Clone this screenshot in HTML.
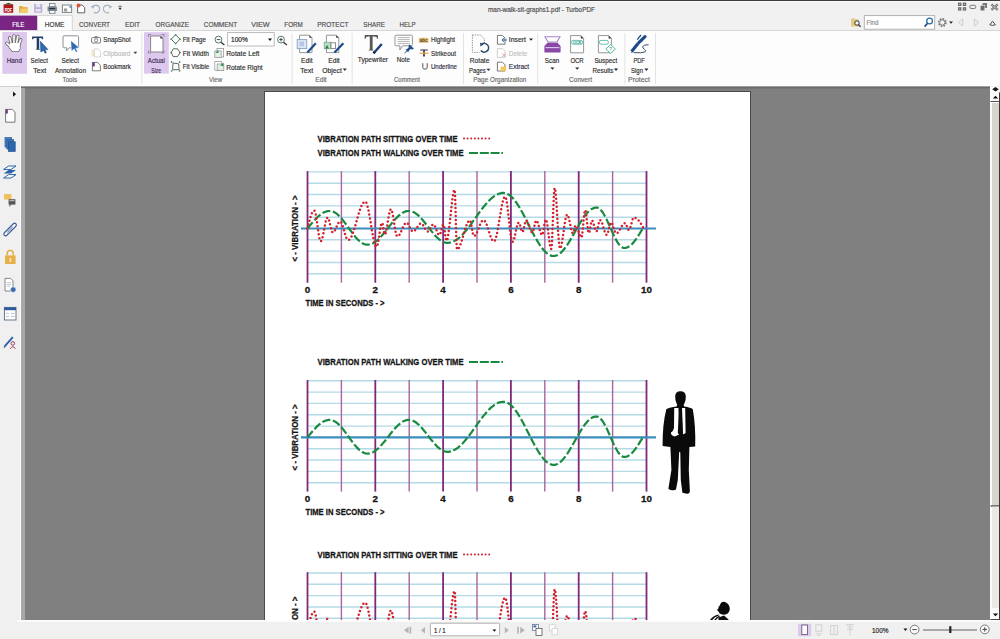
<!DOCTYPE html>
<html><head><meta charset="utf-8">
<style>
*{margin:0;padding:0;box-sizing:border-box}
html,body{width:1000px;height:639px;overflow:hidden;background:#f0f0f0;font-family:"Liberation Sans", sans-serif;}
.abs{position:absolute}
.t{position:absolute;font-size:7px;color:#3a3a3a;white-space:nowrap;line-height:1}
.ct{font-family:"Liberation Sans", sans-serif;font-weight:bold;font-size:9.8px;fill:#151515;stroke:#151515;stroke-width:0.3px}
svg{position:absolute;left:0;top:0;overflow:visible}
</style></head><body>
<div class="abs" style="left:0;top:0;width:1000px;height:1px;background:#3c3c3c"></div>
<div class="abs" style="left:0;top:1px;width:1000px;height:30px;background:#f1f1f1"></div>
<div class="abs" style="left:0;top:30px;width:1000px;height:56px;background:#fdfdfd;border-top:1px solid #d6d6d6"></div>
<svg width='1000' height='639' style='font-family:"Liberation Sans", sans-serif'><rect x="0" y="1" width="1000" height="1" fill="#fbfbfb"/>
<rect x="3.6" y="4.2" width="9.6" height="8.6" fill="#b3141c" rx="0.6"/>
<path d="M4 4.4 L8.5 2.8 L13 4.4 Z" fill="#3a5a2a"/>
<text x="8.4" y="11.6" font-size="6" font-weight="bold" fill="#fff" text-anchor="middle" textLength="7.4" lengthAdjust="spacingAndGlyphs">PDF</text>
<path d="M19 6 L22.5 6 L23.5 7 L27.5 7 L27.5 12.8 L19 12.8 Z" fill="#e2b04c"/>
<path d="M19.5 12.8 L21 8.8 L28.5 8.8 L27.2 12.8 Z" fill="#f0cc6a"/>
<rect x="34.2" y="4" width="8" height="8.8" fill="#b7aed3" rx="0.5"/>
<rect x="36" y="4" width="4.4" height="3.2" fill="#e8e4f3"/>
<rect x="35.6" y="9" width="5.2" height="2.6" fill="#e8e4f3"/>
<rect x="49.5" y="3.6" width="5.5" height="3" fill="#fff" stroke="#76808a" stroke-width="0.9"/>
<rect x="47.5" y="6.4" width="9.5" height="4.8" fill="#7d8a96" rx="1"/>
<rect x="49.2" y="8" width="6" height="1.2" fill="#2a3440"/>
<rect x="49.5" y="10.5" width="5.5" height="2.8" fill="#fff" stroke="#76808a" stroke-width="0.9"/>
<rect x="62.4" y="5" width="9.2" height="7.4" fill="#fff" stroke="#7d8790" stroke-width="1"/>
<rect x="64" y="8.4" width="3.2" height="3.2" fill="#9aa29a"/>
<path d="M68.5 6.2 L71 6.2 L71 8.6 Z" fill="#5d7fb0"/>
<path d="M77.6 5 L82.2 5 L84.7 7.6 L84.7 12.8 L77.6 12.8 Z" fill="#fff" stroke="#555" stroke-width="0.9"/>
<circle cx="78.5" cy="5.4" r="2" fill="#d8563a"/>
<path d="M92.5 7 A3.8 3.8 0 1 1 94 12.3" fill="none" stroke="#9eb0c4" stroke-width="1.3"/>
<path d="M90.6 6.8 L93.8 5.2 L93.6 8.8 Z" fill="#9eb0c4"/>
<path d="M110.5 7 A3.8 3.8 0 1 0 109 12.3" fill="none" stroke="#a8b6c6" stroke-width="1.3"/>
<path d="M112.4 6.8 L109.2 5.2 L109.4 8.8 Z" fill="#a8b6c6"/>
<rect x="118.6" y="5.8" width="3" height="0.8" fill="#333"/>
<path d="M118.4 7.8 L121.8 7.8 L120.1 10 Z" fill="#333"/>
<text x="488" y="12" font-size="7.8" fill="#4a4a4a" stroke="#4a4a4a" stroke-width="0.18" font-weight="normal" text-anchor="start" textLength="107" lengthAdjust="spacingAndGlyphs" >man-walk-sit-graphs1.pdf - TurboPDF</text>
<g fill="#6e6e6e"><rect x="958" y="2.6" width="3.4" height="3.4"/><rect x="962.8" y="2.6" width="3.4" height="3.4"/><rect x="958" y="7.2" width="3.4" height="3.4"/><rect x="962.8" y="7.2" width="3.4" height="3.4"/></g>
<g fill="#c8c8c8"><rect x="959.2" y="3.8" width="1" height="1"/><rect x="964" y="3.8" width="1" height="1"/><rect x="959.2" y="8.4" width="1" height="1"/><rect x="964" y="8.4" width="1" height="1"/></g>
<rect x="969.8" y="5.3" width="6" height="3.2" fill="none" stroke="#777" stroke-width="1" rx="1.4"/>
<rect x="982.6" y="3" width="4.4" height="5" fill="#7a7a7a"/><rect x="980.2" y="5.4" width="4.6" height="5.4" fill="#6e6e6e" stroke="#f0f0f0" stroke-width="0.5"/>
<path d="M991.4 4.4 L997.8 9.8 M997.8 4.4 L991.4 9.8" stroke="#6a6a6a" stroke-width="2.2"/>
<path d="M991.4 4.4 L997.8 9.8 M997.8 4.4 L991.4 9.8" stroke="#e8e8e8" stroke-width="0.6"/>
<path d="M851.2 18.5 L854.5 18.5 L855.5 19.5 L859 19.5 L859 26.5 L851.2 26.5 Z" fill="#e4c77c"/>
<circle cx="857" cy="23" r="2.2" fill="#fff" stroke="#333" stroke-width="1"/><path d="M858.6 24.6 L860.6 26.8" stroke="#333" stroke-width="1.3"/>
<rect x="864.3" y="15.6" width="70.4" height="13.6" fill="#fff" stroke="#acacac" stroke-width="0.9"/>
<text x="866.4" y="25.4" font-size="7" fill="#8c8c8c" stroke="#8c8c8c" stroke-width="0.18" font-weight="normal" text-anchor="start" textLength="12" lengthAdjust="spacingAndGlyphs" >Find</text>
<circle cx="929.6" cy="21" r="2.9" fill="none" stroke="#2d6ca8" stroke-width="1.3"/><path d="M927.6 23.2 L924.6 26.6" stroke="#1f4f85" stroke-width="1.7"/>
<circle cx="942.3" cy="22.5" r="3.6" fill="none" stroke="#707070" stroke-width="1.6" stroke-dasharray="1.6 1.2"/>
<circle cx="942.3" cy="22.5" r="2.6" fill="none" stroke="#707070" stroke-width="0.8"/>
<path d="M949 21.5 L953 21.5 L951 23.8 Z" fill="#222"/>
<path d="M962.8 19 L958.6 22.5 L962.8 26 Z" fill="none" stroke="#c8c8c8" stroke-width="0.9"/>
<path d="M974.4 19 L978.6 22.5 L974.4 26 Z" fill="none" stroke="#c8c8c8" stroke-width="0.9"/>
<path d="M989.8 24.8 L992.6 21.2 L995.4 24.8 Q992.6 26 989.8 24.8 Z" fill="none" stroke="#3a3a3a" stroke-width="0.9"/>
<rect x="0" y="15.6" width="37.4" height="14.4" fill="#7a2583"/>
<text x="12.3" y="26.6" font-size="7.4" fill="#ffffff" stroke="#ffffff" stroke-width="0.18" font-weight="normal" text-anchor="start" textLength="12" lengthAdjust="spacingAndGlyphs" >FILE</text>
<path d="M37.5 30.5 L37.5 15.5 L72.3 15.5 L72.3 30.5" fill="#fdfdfd" stroke="#d2d2d2" stroke-width="0.9"/>
<text x="44.8" y="26.8" font-size="7.6" fill="#3c3c3c" stroke="#3c3c3c" stroke-width="0.18" font-weight="normal" text-anchor="start" textLength="19.7" lengthAdjust="spacingAndGlyphs" >HOME</text>
<text x="79" y="26.8" font-size="7.6" fill="#505050" stroke="#505050" stroke-width="0.18" font-weight="normal" text-anchor="start" textLength="31" lengthAdjust="spacingAndGlyphs" >CONVERT</text>
<text x="125" y="26.8" font-size="7.6" fill="#505050" stroke="#505050" stroke-width="0.18" font-weight="normal" text-anchor="start" textLength="15" lengthAdjust="spacingAndGlyphs" >EDIT</text>
<text x="155.6" y="26.8" font-size="7.6" fill="#505050" stroke="#505050" stroke-width="0.18" font-weight="normal" text-anchor="start" textLength="33.4" lengthAdjust="spacingAndGlyphs" >ORGANIZE</text>
<text x="203.7" y="26.8" font-size="7.6" fill="#505050" stroke="#505050" stroke-width="0.18" font-weight="normal" text-anchor="start" textLength="33.6" lengthAdjust="spacingAndGlyphs" >COMMENT</text>
<text x="251.2" y="26.8" font-size="7.6" fill="#505050" stroke="#505050" stroke-width="0.18" font-weight="normal" text-anchor="start" textLength="18.5" lengthAdjust="spacingAndGlyphs" >VIEW</text>
<text x="284.3" y="26.8" font-size="7.6" fill="#505050" stroke="#505050" stroke-width="0.18" font-weight="normal" text-anchor="start" textLength="18.5" lengthAdjust="spacingAndGlyphs" >FORM</text>
<text x="317.2" y="26.8" font-size="7.6" fill="#505050" stroke="#505050" stroke-width="0.18" font-weight="normal" text-anchor="start" textLength="31.2" lengthAdjust="spacingAndGlyphs" >PROTECT</text>
<text x="363.3" y="26.8" font-size="7.6" fill="#505050" stroke="#505050" stroke-width="0.18" font-weight="normal" text-anchor="start" textLength="21.6" lengthAdjust="spacingAndGlyphs" >SHARE</text>
<text x="399.5" y="26.8" font-size="7.6" fill="#505050" stroke="#505050" stroke-width="0.18" font-weight="normal" text-anchor="start" textLength="16.1" lengthAdjust="spacingAndGlyphs" >HELP</text><rect x="141.3" y="33" width="1" height="51" fill="#e3e3e3"/>
<rect x="291.6" y="33" width="1" height="51" fill="#e3e3e3"/>
<rect x="351.6" y="33" width="1" height="51" fill="#e3e3e3"/>
<rect x="463" y="33" width="1" height="51" fill="#e3e3e3"/>
<rect x="537.2" y="33" width="1" height="51" fill="#e3e3e3"/>
<rect x="624.4" y="33" width="1" height="51" fill="#e3e3e3"/>
<rect x="655" y="33" width="1" height="51" fill="#e3e3e3"/>
<rect x="2.4" y="32" width="24.6" height="41.8" fill="#ddc8ee"/>
<rect x="144" y="32.2" width="24.8" height="41.4" fill="#ddc8ee"/>
<path d="M11 47 L6.8 43.2 M11.6 44 L9.6 37.8 M14 43.6 L14 35.8 M16.6 43.6 L17.8 36.4 M18.6 45 L20.8 39.8" stroke="#6a6a6a" stroke-width="3.3" stroke-linecap="round"/>
<path d="M10.2 43 L19.8 43 L19.8 48.6 L18.4 51.2 L12.4 51.2 L9.4 47.6 Z" fill="#6a6a6a" stroke="#6a6a6a" stroke-width="1.4" stroke-linejoin="round"/>
<path d="M11 47 L6.8 43.2 M11.6 44 L9.6 37.8 M14 43.6 L14 35.8 M16.6 43.6 L17.8 36.4 M18.6 45 L20.8 39.8" stroke="#ffffff" stroke-width="1.7" stroke-linecap="round"/>
<path d="M10.2 43 L19.8 43 L19.8 48.6 L18.4 51.2 L12.4 51.2 L9.4 47.6 Z" fill="#ffffff"/>
<path d="M11.4 43.2 L11.2 40.6 M15.2 42.8 L15.4 38.6 M17.6 43.2 L18.6 40" stroke="#8a8a8a" stroke-width="0.6"/>
<text x="6.65" y="63" font-size="7.8" fill="#3c2e4e" stroke="#3c2e4e" stroke-width="0.18" font-weight="normal" text-anchor="start" textLength="15.3" lengthAdjust="spacingAndGlyphs" >Hand</text>
<path d="M32.2 36.4 L43 36.4 L43.2 39.2 L42.2 39.2 Q41.8 38 40.4 38 L39.2 38 L39.2 49 L40.4 49.7 L35.4 49.7 L36.7 49 L36.7 38 L34.8 38 Q33.4 38 33 39.2 L32 39.2 Z" fill="#1f3d68"/>
<path d="M40.4 41.2 L48 49.6 L45 49.8 L46.4 52.6 L45 53.2 L43.6 50.4 L40.8 52 Z" fill="#2c6bb2" stroke="#1a3f70" stroke-width="0.5"/>
<text x="30.6" y="63" font-size="7.8" fill="#2e2e2e" stroke="#2e2e2e" stroke-width="0.18" font-weight="normal" text-anchor="start" textLength="17.4" lengthAdjust="spacingAndGlyphs" >Select</text>
<text x="33.35" y="72.5" font-size="7.8" fill="#2e2e2e" stroke="#2e2e2e" stroke-width="0.18" font-weight="normal" text-anchor="start" textLength="12.9" lengthAdjust="spacingAndGlyphs" >Text</text>
<path d="M64 35.8 L77.6 35.8 Q78.6 35.8 78.6 36.8 L78.6 47 Q78.6 47.8 77.6 47.8 L69 47.8 L66.4 51 L66.8 47.8 L64 47.8 Q63 47.8 63 46.8 L63 36.8 Q63 35.8 64 35.8 Z" fill="#ffffff" stroke="#8a929c" stroke-width="1"/>
<path d="M70.8 40.4 L79.2 47.8 L75.8 48.2 L77.6 51.6 L75.9 52.3 L74.2 48.9 L71.4 51.2 Z" fill="#2c6bb2" stroke="#fff" stroke-width="0.5"/>
<text x="61.5" y="63" font-size="7.8" fill="#2e2e2e" stroke="#2e2e2e" stroke-width="0.18" font-weight="normal" text-anchor="start" textLength="17.4" lengthAdjust="spacingAndGlyphs" >Select</text>
<text x="55.0" y="72.5" font-size="7.8" fill="#2e2e2e" stroke="#2e2e2e" stroke-width="0.18" font-weight="normal" text-anchor="start" textLength="31" lengthAdjust="spacingAndGlyphs" >Annotation</text>
<rect x="91.6" y="37.6" width="9" height="5.4" fill="none" stroke="#7c7c7c" stroke-width="1" rx="1"/>
<rect x="94.6" y="36.2" width="3" height="1.6" fill="#7c7c7c"/>
<circle cx="96.1" cy="40.3" r="1.6" fill="none" stroke="#7c7c7c" stroke-width="0.9"/>
<text x="103.3" y="42.3" font-size="7.8" fill="#2e2e2e" stroke="#2e2e2e" stroke-width="0.18" font-weight="normal" text-anchor="start" textLength="27.4" lengthAdjust="spacingAndGlyphs" >SnapShot</text>
<rect x="91.5" y="49.5" width="5" height="7" fill="#f2e6c4"/>
<path d="M94.5 49 L98 49 L100.6 52 L100.6 57 L94.5 57 Z" fill="#fff" stroke="#d4d4d4" stroke-width="0.9"/>
<text x="103.3" y="55.5" font-size="7.8" fill="#bdbdbd" stroke="#bdbdbd" stroke-width="0.18" font-weight="normal" text-anchor="start" textLength="27" lengthAdjust="spacingAndGlyphs" >Clipboard</text>
<path d="M133.3 51.8 L137.3 51.8 L135.3 54.099999999999994 Z" fill="#444"/>
<path d="M92.4 62.4 L97.6 62.4 L100.4 65.4 L100.4 70.8 L92.4 70.8 Z" fill="#fff" stroke="#6c6c6c" stroke-width="0.9"/>
<rect x="92.4" y="62.4" width="2.4" height="4" fill="#6a3a8a"/>
<text x="103.3" y="69" font-size="7.8" fill="#2e2e2e" stroke="#2e2e2e" stroke-width="0.18" font-weight="normal" text-anchor="start" textLength="27.6" lengthAdjust="spacingAndGlyphs" >Bookmark</text>
<text x="62.6" y="82.3" font-size="7.8" fill="#6a6a6a" stroke="#6a6a6a" stroke-width="0.18" font-weight="normal" text-anchor="start" textLength="14.4" lengthAdjust="spacingAndGlyphs" >Tools</text>
<path d="M148.5 37 L148.5 34.5 L151 34.5 M161.5 34.5 L164 34.5 L164 37 M164 50.5 L164 53 L161.5 53 M151 53 L148.5 53 L148.5 50.5" fill="none" stroke="#8c7aa6" stroke-width="0.9"/>
<path d="M150.6 36 L160.4 36 L163 38.6 L163 52 L150.6 52 Z" fill="#fff" stroke="#7a7a7a" stroke-width="0.9"/>
<path d="M160.4 36 L163 38.6 L160.4 38.6 Z" fill="#333"/>
<text x="147.85" y="63" font-size="7.8" fill="#3c2e4e" stroke="#3c2e4e" stroke-width="0.18" font-weight="normal" text-anchor="start" textLength="16.9" lengthAdjust="spacingAndGlyphs" >Actual</text>
<text x="151.35" y="72.8" font-size="7.8" fill="#3c2e4e" stroke="#3c2e4e" stroke-width="0.18" font-weight="normal" text-anchor="start" textLength="9.7" lengthAdjust="spacingAndGlyphs" >Size</text>
<path d="M175.6 34.8 L180 39.2 L175.6 43.6 L171.2 39.2 Z" fill="none" stroke="#3e5c4e" stroke-width="0.9"/>
<g fill="#4a8a6a"><circle cx="175.6" cy="34.8" r="0.9"/><circle cx="180" cy="39.2" r="0.9"/><circle cx="175.6" cy="43.6" r="0.9"/><circle cx="171.2" cy="39.2" r="0.9"/></g>
<text x="182.8" y="42.2" font-size="7.8" fill="#2e2e2e" stroke="#2e2e2e" stroke-width="0.18" font-weight="normal" text-anchor="start" textLength="23.2" lengthAdjust="spacingAndGlyphs" >Fit Page</text>
<path d="M173.2 48.8 L177.6 48.8 L180 52.6 L177.6 56.6 L173.2 56.6 L171.2 52.6 Z" fill="none" stroke="#4a5a54" stroke-width="0.9"/>
<g fill="#4a8a6a"><circle cx="171.2" cy="52.6" r="0.9"/><circle cx="180" cy="52.6" r="0.9"/></g>
<text x="182.8" y="55.5" font-size="7.8" fill="#2e2e2e" stroke="#2e2e2e" stroke-width="0.18" font-weight="normal" text-anchor="start" textLength="26.2" lengthAdjust="spacingAndGlyphs" >Fit Width</text>
<path d="M173 63 L178.6 63.8 L179.2 69.6 L172.6 69.8 Z" fill="none" stroke="#4a5a54" stroke-width="0.9"/>
<g fill="#4a8a6a"><circle cx="171.6" cy="62" r="0.9"/><circle cx="179.6" cy="62" r="0.9"/><circle cx="171.6" cy="70.8" r="0.9"/><circle cx="179.6" cy="70.8" r="0.9"/></g>
<text x="182.8" y="69.2" font-size="7.8" fill="#2e2e2e" stroke="#2e2e2e" stroke-width="0.18" font-weight="normal" text-anchor="start" textLength="26.4" lengthAdjust="spacingAndGlyphs" >Fit Visible</text>
<text x="209.0" y="82.3" font-size="7.8" fill="#6a6a6a" stroke="#6a6a6a" stroke-width="0.18" font-weight="normal" text-anchor="start" textLength="13" lengthAdjust="spacingAndGlyphs" >View</text>
<circle cx="218.5" cy="39.6" r="3.4" fill="#fff" stroke="#557a6e" stroke-width="1"/><path d="M216.8 39.6 L220.2 39.6" stroke="#333" stroke-width="0.9"/><path d="M221 42.2 L224.4 45" stroke="#333" stroke-width="1.3"/>
<rect x="227.6" y="32.6" width="46.6" height="13.4" fill="#fff" stroke="#b4b4b4" stroke-width="0.9"/>
<text x="231" y="42.4" font-size="7.4" fill="#222" stroke="#222" stroke-width="0.18" font-weight="normal" text-anchor="start" textLength="16.8" lengthAdjust="spacingAndGlyphs" >100%</text>
<path d="M268 38.6 L272 38.6 L270 40.9 Z" fill="#111"/>
<circle cx="281" cy="39.6" r="3.4" fill="#fff" stroke="#557a6e" stroke-width="1"/><path d="M279.3 39.6 L282.7 39.6 M281 37.9 L281 41.3" stroke="#333" stroke-width="0.9"/><path d="M283.5 42.2 L286.9 45" stroke="#333" stroke-width="1.3"/>
<rect x="217" y="48.4" width="6.6" height="8.6" fill="#fff" stroke="#9a9a9a" stroke-width="0.8"/><rect x="214.8" y="51" width="6.4" height="6.4" fill="#e4efe8" stroke="#9a9a9a" stroke-width="0.8"/><path d="M215.6 53 L218.2 50 L218.6 52.8 Z" fill="#2e8a5a"/>
<text x="226.2" y="56.2" font-size="7.8" fill="#2e2e2e" stroke="#2e2e2e" stroke-width="0.18" font-weight="normal" text-anchor="start" textLength="33.3" lengthAdjust="spacingAndGlyphs" >Rotate Left</text>
<rect x="214.8" y="61.6" width="6.6" height="8.6" fill="#fff" stroke="#9a9a9a" stroke-width="0.8"/><rect x="217.2" y="64" width="6.6" height="6.6" fill="#dff0e4" stroke="#9a9a9a" stroke-width="0.8"/><path d="M223.4 62.6 L220.4 65.6 L223.4 66.2 Z" fill="#2e8a5a"/>
<text x="226.2" y="69.6" font-size="7.8" fill="#2e2e2e" stroke="#2e2e2e" stroke-width="0.18" font-weight="normal" text-anchor="start" textLength="36.5" lengthAdjust="spacingAndGlyphs" >Rotate Right</text>
<path d="M299.6 35.2 L309.4 35.2 L312 37.8 L312 52.6 L299.6 52.6 Z" fill="#fff" stroke="#8a8a8a" stroke-width="0.9"/>
<path d="M309.4 35.2 L312 37.8 L309.4 37.8 Z" fill="#333"/>
<rect x="297.2" y="39.6" width="9.6" height="9" fill="#dbe6f4" stroke="#8aa0c0" stroke-width="0.9"/>
<rect x="299.4" y="41.6" width="4.6" height="4.6" fill="#b4c8e4"/>
<path d="M307.4 52.6 L315.8 43.2" stroke="#1d4a8e" stroke-width="2.2"/>
<text x="301.1" y="63" font-size="7.8" fill="#2e2e2e" stroke="#2e2e2e" stroke-width="0.18" font-weight="normal" text-anchor="start" textLength="11.4" lengthAdjust="spacingAndGlyphs" >Edit</text>
<text x="300.35" y="72.5" font-size="7.8" fill="#2e2e2e" stroke="#2e2e2e" stroke-width="0.18" font-weight="normal" text-anchor="start" textLength="12.9" lengthAdjust="spacingAndGlyphs" >Text</text>
<path d="M326.4 35.2 L336.2 35.2 L338.8 37.8 L338.8 52.6 L326.4 52.6 Z" fill="#fff" stroke="#8a8a8a" stroke-width="0.9"/>
<path d="M336.2 35.2 L338.8 37.8 L336.2 37.8 Z" fill="#333"/>
<rect x="324.2" y="42.2" width="6.8" height="6.6" fill="#b8dcc4" stroke="#7aa88a" stroke-width="0.8"/>
<rect x="331" y="42.8" width="4.6" height="5.6" fill="#fff" stroke="#777" stroke-width="0.8"/>
<path d="M325 48.6 L327 45 L329 48.6 Z" fill="#2c7a4a"/>
<path d="M334.4 52.6 L343.4 43.2" stroke="#1d4a8e" stroke-width="2.2"/>
<text x="328.3" y="63" font-size="7.8" fill="#2e2e2e" stroke="#2e2e2e" stroke-width="0.18" font-weight="normal" text-anchor="start" textLength="11.4" lengthAdjust="spacingAndGlyphs" >Edit</text>
<text x="322.2" y="72.5" font-size="7.8" fill="#2e2e2e" stroke="#2e2e2e" stroke-width="0.18" font-weight="normal" text-anchor="start" textLength="19.6" lengthAdjust="spacingAndGlyphs" >Object</text>
<path d="M342.8 68.6 L346.8 68.6 L344.8 70.89999999999999 Z" fill="#333"/>
<text x="315.3" y="82.3" font-size="7.8" fill="#6a6a6a" stroke="#6a6a6a" stroke-width="0.18" font-weight="normal" text-anchor="start" textLength="11.4" lengthAdjust="spacingAndGlyphs" >Edit</text>
<path d="M364.8 35 L377.8 35 L378 38.8 L377.2 38.8 Q376.8 36.6 374.6 36.6 L372.6 36.6 L372.6 49.2 L373.8 50.4 L368.4 50.4 L369.8 49.2 L369.8 36.6 L368 36.6 Q365.8 36.6 365.6 38.8 L364.6 38.8 Z" fill="#585858"/>
<path d="M373.6 53.2 L381.8 44" stroke="#1d4078" stroke-width="2.4"/>
<path d="M373.6 53.2 L374.8 51.8" stroke="#0d2040" stroke-width="2.4"/>
<text x="357.8" y="62.4" font-size="7.8" fill="#2e2e2e" stroke="#2e2e2e" stroke-width="0.18" font-weight="normal" text-anchor="start" textLength="30.2" lengthAdjust="spacingAndGlyphs" >Typewriter</text>
<path d="M396 35.2 L411.4 35.2 Q412.4 35.2 412.4 36.2 L412.4 44.8 Q412.4 45.8 411.4 45.8 L402.6 45.8 L399.8 50 L400 45.8 L396 45.8 Q395 45.8 395 44.8 L395 36.2 Q395 35.2 396 35.2 Z" fill="#fff" stroke="#8a8a8a" stroke-width="0.9"/>
<g stroke="#9a9a9a" stroke-width="0.7"><path d="M397.6 37.6 L409.8 37.6 M397.6 39.6 L409.8 39.6 M397.6 41.6 L409.8 41.6 M397.6 43.6 L409.8 43.6"/></g>
<path d="M409.6 44.4 L413.8 48.6 L412.6 49.4 L410.6 49 L408.6 51 L408.4 52.4 L407.2 51.2 L404.6 53.6 L404.2 53.2 L406.6 50.6 L405.4 49.4 L406.8 49.2 L408.8 47.2 L408.6 45.4 Z" fill="#244c8c"/>
<text x="396.8" y="62.4" font-size="7.8" fill="#2e2e2e" stroke="#2e2e2e" stroke-width="0.18" font-weight="normal" text-anchor="start" textLength="13.2" lengthAdjust="spacingAndGlyphs" >Note</text>
<rect x="418.8" y="37.8" width="9.6" height="5" fill="#e2c27a"/>
<text x="423.6" y="42" font-size="4.6" fill="#5a4a2a" text-anchor="middle" font-weight="bold">abc</text>
<text x="430.9" y="42.2" font-size="7.8" fill="#333" stroke="#333" stroke-width="0.18" font-weight="normal" text-anchor="start" textLength="24.2" lengthAdjust="spacingAndGlyphs" >Highlight</text>
<path d="M420.2 49.4 L427.8 49.4 L427.8 50.6 L424.8 50.6 L424.8 56.6 L423.2 56.6 L423.2 50.6 L420.2 50.6 Z" fill="#333"/>
<rect x="419.6" y="52.6" width="8.8" height="1.2" fill="#e8a050"/>
<text x="430.9" y="55.5" font-size="7.8" fill="#333" stroke="#333" stroke-width="0.18" font-weight="normal" text-anchor="start" textLength="25.1" lengthAdjust="spacingAndGlyphs" >Strikeout</text>
<path d="M422.8 63.2 L422.8 67.4 Q422.8 69.2 425 69.2 Q427.2 69.2 427.2 67.4 L427.2 63.2" fill="none" stroke="#555" stroke-width="1"/>
<text x="430.9" y="69.2" font-size="7.8" fill="#2e2e48" stroke="#2e2e48" stroke-width="0.18" font-weight="normal" text-anchor="start" textLength="26.1" lengthAdjust="spacingAndGlyphs" >Underline</text>
<text x="394.0" y="82.3" font-size="7.8" fill="#6a6a6a" stroke="#6a6a6a" stroke-width="0.18" font-weight="normal" text-anchor="start" textLength="26" lengthAdjust="spacingAndGlyphs" >Comment</text>
<path d="M472.4 35 L480.6 35 L484.4 38.8 L484.4 43 M472.4 35 L472.4 52.4 L479.6 52.4" fill="none" stroke="#8a8a8a" stroke-width="0.9" stroke-dasharray="1.4 1"/>
<path d="M481.6 44.2 A4.4 4.4 0 1 1 480.8 50.6" fill="none" stroke="#2f4e6e" stroke-width="1.6"/>
<path d="M480 42.4 L483.6 44.4 L480.4 46.6 Z" fill="#2f4e6e"/>
<text x="469.85" y="63.4" font-size="7.8" fill="#2e2e2e" stroke="#2e2e2e" stroke-width="0.18" font-weight="normal" text-anchor="start" textLength="19.5" lengthAdjust="spacingAndGlyphs" >Rotate</text>
<text x="469" y="72.8" font-size="7.8" fill="#2e2e2e" stroke="#2e2e2e" stroke-width="0.18" font-weight="normal" text-anchor="start" textLength="16.8" lengthAdjust="spacingAndGlyphs" >Pages</text>
<path d="M486.4 68.8 L490.4 68.8 L488.4 71.1 Z" fill="#333"/>
<path d="M497.4 35.4 L502.4 35.4 L505 38 L505 44.2 L497.4 44.2 Z" fill="#fff" stroke="#6a6a6a" stroke-width="0.9"/>
<path d="M502 40 L507 40 M503.8 38.2 L502 40 L503.8 41.8" fill="none" stroke="#2a62a8" stroke-width="1"/>
<text x="508.8" y="42.2" font-size="7.8" fill="#2f2f2f" stroke="#2f2f2f" stroke-width="0.18" font-weight="normal" text-anchor="start" textLength="17.2" lengthAdjust="spacingAndGlyphs" >Insert</text>
<path d="M529 38.4 L533 38.4 L531 40.699999999999996 Z" fill="#222"/>
<path d="M497.4 48.6 L502.4 48.6 L505 51.2 L505 57.4 L497.4 57.4 Z" fill="#fff" stroke="#c8c8c8" stroke-width="0.9"/>
<path d="M502.2 53.4 L505.8 57 M505.8 53.4 L502.2 57" stroke="#e0a0a0" stroke-width="0.9"/>
<text x="508.8" y="55.5" font-size="7.8" fill="#c0c0c0" stroke="#c0c0c0" stroke-width="0.18" font-weight="normal" text-anchor="start" textLength="18.4" lengthAdjust="spacingAndGlyphs" >Delete</text>
<path d="M497.4 62.2 L502.4 62.2 L505 64.8 L505 71 L497.4 71 Z" fill="#fff" stroke="#6a6a6a" stroke-width="0.9"/>
<rect x="500.6" y="66.6" width="5.4" height="4.6" fill="#f0c860"/>
<text x="508.8" y="69.2" font-size="7.8" fill="#2e2e48" stroke="#2e2e48" stroke-width="0.18" font-weight="normal" text-anchor="start" textLength="20.4" lengthAdjust="spacingAndGlyphs" >Extract</text>
<text x="473.3" y="82.3" font-size="7.8" fill="#6a6a6a" stroke="#6a6a6a" stroke-width="0.18" font-weight="normal" text-anchor="start" textLength="53" lengthAdjust="spacingAndGlyphs" >Page Organization</text>
<path d="M545 36.8 L560 36.8 L557 42 L548 42 Z" fill="none" stroke="#a884c4" stroke-width="1.1"/>
<path d="M547.5 42.8 L557.5 42.8 L560.6 46 L560.6 51.8 Q560.6 52.4 560 52.4 L545 52.4 Q544.4 52.4 544.4 51.8 L544.4 46 Z" fill="#8a48a6"/>
<rect x="545.6" y="47" width="13.8" height="1.2" fill="#d8c0e8"/>
<text x="544.8" y="63" font-size="7.8" fill="#2e2e2e" stroke="#2e2e2e" stroke-width="0.18" font-weight="normal" text-anchor="start" textLength="14.4" lengthAdjust="spacingAndGlyphs" >Scan</text>
<path d="M550.4 67.4 L554.4 67.4 L552.4 69.7 Z" fill="#222"/>
<path d="M570.6 35.6 L580.8 35.6 L583.6 38.4 L583.6 52.8 L570.6 52.8 Z" fill="#fff" stroke="#8a8a8a" stroke-width="0.9"/>
<path d="M580.8 35.6 L583.6 38.4 L580.8 38.4 Z" fill="#333"/>
<rect x="571.6" y="40.4" width="11" height="3.8" fill="none" stroke="#3fb49a" stroke-width="0.8" rx="1.6"/>
<text x="577.1" y="43.6" font-size="3.6" fill="#2a9a80" text-anchor="middle" font-weight="bold">OCR</text>
<text x="570.4" y="63" font-size="7.8" fill="#2e2e2e" stroke="#2e2e2e" stroke-width="0.18" font-weight="normal" text-anchor="start" textLength="13.2" lengthAdjust="spacingAndGlyphs" >OCR</text>
<path d="M575.2 67.4 L579.2 67.4 L577.2 69.7 Z" fill="#222"/>
<path d="M598.4 35.6 L608.6 35.6 L611.4 38.4 L611.4 52.8 L598.4 52.8 Z" fill="#fff" stroke="#8a8a8a" stroke-width="0.9"/>
<path d="M608.6 35.6 L611.4 38.4 L608.6 38.4 Z" fill="#333"/>
<rect x="599.4" y="40.4" width="9" height="3.8" fill="none" stroke="#3fb49a" stroke-width="0.8" rx="1.6"/>
<path d="M610.6 44.6 L615.4 49 L610.6 53.4 L605.8 49 Z" fill="#fff" stroke="#3fb49a" stroke-width="0.9"/>
<text x="610.6" y="51" font-size="5" fill="#2a9a80" text-anchor="middle">?</text>
<text x="594.4" y="63" font-size="7.8" fill="#2e2e2e" stroke="#2e2e2e" stroke-width="0.18" font-weight="normal" text-anchor="start" textLength="22.8" lengthAdjust="spacingAndGlyphs" >Suspect</text>
<text x="592.6" y="72.6" font-size="7.8" fill="#2e2e2e" stroke="#2e2e2e" stroke-width="0.18" font-weight="normal" text-anchor="start" textLength="20.8" lengthAdjust="spacingAndGlyphs" >Results</text>
<path d="M614 68.6 L618 68.6 L616 70.89999999999999 Z" fill="#222"/>
<text x="569.0" y="82.3" font-size="7.8" fill="#6a6a6a" stroke="#6a6a6a" stroke-width="0.18" font-weight="normal" text-anchor="start" textLength="23" lengthAdjust="spacingAndGlyphs" >Convert</text>
<path d="M631.6 51.4 L638 43.6" stroke="#1f4a8a" stroke-width="3.2"/>
<path d="M638.8 42.6 L645 36.6" stroke="#1f4a8a" stroke-width="3.2" stroke-linecap="round"/>
<path d="M631.6 51.4 L630.8 52.8 L632.6 52.2 Z" fill="#1a3060"/>
<path d="M637.2 39.6 L641 35" stroke="#1f4a8a" stroke-width="1.2"/>
<path d="M648.6 44.8 Q643.6 44.6 642.8 46.4 Q642.2 48 644.6 49.4 Q646.4 50.8 644.8 52 Q642 53.2 633.6 52.6" fill="none" stroke="#3c4c6c" stroke-width="1"/>
<text x="633.4" y="63" font-size="7.8" fill="#2e2e2e" stroke="#2e2e2e" stroke-width="0.18" font-weight="normal" text-anchor="start" textLength="11.4" lengthAdjust="spacingAndGlyphs" >PDF</text>
<text x="631" y="72.6" font-size="7.8" fill="#2e2e2e" stroke="#2e2e2e" stroke-width="0.18" font-weight="normal" text-anchor="start" textLength="12" lengthAdjust="spacingAndGlyphs" >Sign</text>
<path d="M644.4 68.6 L648.4 68.6 L646.4 70.89999999999999 Z" fill="#222"/>
<text x="628.0" y="82.3" font-size="7.8" fill="#6a6a6a" stroke="#6a6a6a" stroke-width="0.18" font-weight="normal" text-anchor="start" textLength="22" lengthAdjust="spacingAndGlyphs" >Protect</text></svg>
<div class="abs" style="left:0;top:86px;width:21px;height:534px;background:#f0f0f0;border-top:1px solid #d0d0d0"></div>
<div class="abs" style="left:20px;top:86px;width:1px;height:534px;background:#fafafa"></div>
<div class="abs" style="left:21px;top:86px;width:969px;height:534px;background:#808080"></div>
<div class="abs" style="left:21px;top:86px;width:969px;height:1px;background:#a0a0a0"></div><div class="abs" style="left:21px;top:87px;width:969px;height:1px;background:#6a6a6a"></div><div class="abs" style="left:21px;top:88px;width:969px;height:1px;background:#767676"></div>
<div class="abs" style="left:21px;top:88px;width:4px;height:532px;background:#a8a8a8"></div>
<div class="abs" style="left:264px;top:90.5px;width:487px;height:529.5px;background:#ffffff;border:1px solid #4a4a4a;border-bottom:none"></div>
<svg width='1000' height='639' style='font-family:"Liberation Sans", sans-serif'><path d="M13 91.6 L16 94.2 L13 96.8 Z" fill="#111"/>
<path d="M5.6 109.4 L12.2 109.4 L15 112.2 L15 122.2 L5.6 122.2 Z" fill="#fff" stroke="#6a6a6a" stroke-width="0.9"/>
<rect x="5.6" y="109.4" width="2.2" height="4.2" fill="#6a3a8a"/>
<rect x="5" y="137.6" width="6.6" height="9.4" fill="#4f86c6" stroke="#2a5a98" stroke-width="0.7"/>
<rect x="6.8" y="139.6" width="6.6" height="9.4" fill="#3f76b8" stroke="#2a5a98" stroke-width="0.7"/>
<rect x="8.6" y="141.8" width="6.6" height="9.6" fill="#2c66ac" stroke="#1f4f8c" stroke-width="0.7"/>
<path d="M3.6 169.4 L8.6 166 L16 166 L11 169.4 Z" fill="#fff" stroke="#2a62a8" stroke-width="1"/>
<path d="M3.6 173.4 L8.6 170 L16 170 L11 173.4 Z" fill="#2a62a8"/>
<path d="M3.6 178 L8.6 174.6 L16 174.6 L11 178 Z" fill="#fff" stroke="#2a62a8" stroke-width="1"/>
<rect x="4" y="194" width="7.4" height="5.6" fill="#f0c060"/>
<rect x="8.6" y="199.2" width="6.8" height="5.4" fill="#555"/>
<rect x="9.6" y="200.2" width="4.8" height="1" fill="#ccc"/><path d="M9.4 204.6 L9.4 207 L11.4 204.6 Z" fill="#555"/>
<path d="M5.6 234 L14.6 225" stroke="#3a5a94" stroke-width="4.6" stroke-linecap="round"/>
<path d="M5.6 234 L14.6 225" stroke="#fff" stroke-width="2.4" stroke-linecap="round"/>
<path d="M7.6 232 L12.4 227.2" stroke="#3a5a94" stroke-width="1" stroke-linecap="round"/>
<path d="M7.2 255.6 L7.2 253.6 Q7.2 250.4 10.2 250.4 Q13.2 250.4 13.2 253.6 L13.2 255.6" fill="none" stroke="#e2a840" stroke-width="1.4"/>
<rect x="5" y="255.4" width="10.6" height="8.6" fill="#e8b04a"/>
<rect x="9.6" y="258" width="1.6" height="4" fill="#fbe8b8"/>
<path d="M5 278.4 L10.6 278.4 L13 280.8 L13 291 L5 291 Z" fill="#fff" stroke="#7a7a7a" stroke-width="0.9"/>
<g stroke="#9aa6b6" stroke-width="0.6"><path d="M6.6 282.6 L11 282.6 M6.6 284.4 L11 284.4 M6.6 286.2 L10 286.2"/></g>
<circle cx="13.2" cy="289.6" r="2.8" fill="#3a6ab0" stroke="#fff" stroke-width="0.6"/>
<rect x="4.4" y="307.4" width="11.6" height="12.6" fill="#fff" stroke="#5a6a84" stroke-width="0.9"/>
<rect x="4.4" y="307.4" width="11.6" height="2.8" fill="#2c5a9a"/>
<g stroke="#8a98a8" stroke-width="0.6"><path d="M6 313.4 L9 313.4 M11 313.4 L14.6 313.4 M6 316.4 L9 316.4 M11 316.4 L14.6 316.4"/></g>
<path d="M4.4 346.6 L12.8 337.2" stroke="#2a5ca8" stroke-width="1.8"/>
<path d="M3.4 348.2 L4.6 346.2 L5.4 347 Z" fill="#1a3a70"/>
<circle cx="12.8" cy="343.4" r="1.8" fill="none" stroke="#a03a6a" stroke-width="1"/>
<path d="M10.2 348.8 Q12.8 344.6 15.4 348.8" fill="none" stroke="#a03a6a" stroke-width="1"/></svg>
<svg width="1000" height="639" style="clip-path:inset(92px 0 19px 0)">
<text x="317.6" y="141.7" class="ct" textLength="140" lengthAdjust="spacingAndGlyphs">VIBRATION PATH SITTING OVER TIME</text>
<line x1="464" y1="138.5" x2="490" y2="138.5" stroke="#c8202c" stroke-width="2" stroke-linecap="round" stroke-dasharray="0 3.6"/>
<text x="317.6" y="156.3" class="ct" textLength="146" lengthAdjust="spacingAndGlyphs">VIBRATION PATH WALKING OVER TIME</text>
<line x1="469" y1="153.1" x2="503" y2="153.1" stroke="#1a8a40" stroke-width="2" stroke-dasharray="9 1.8"/>
<text x="317.6" y="365.3" class="ct" textLength="146" lengthAdjust="spacingAndGlyphs">VIBRATION PATH WALKING OVER TIME</text>
<line x1="469" y1="362.1" x2="503" y2="362.1" stroke="#1a8a40" stroke-width="2" stroke-dasharray="9 1.8"/>
<text x="317.6" y="557.8" class="ct" textLength="140" lengthAdjust="spacingAndGlyphs">VIBRATION PATH SITTING OVER TIME</text>
<line x1="464" y1="554.6" x2="490" y2="554.6" stroke="#c8202c" stroke-width="2" stroke-linecap="round" stroke-dasharray="0 3.6"/>
<line x1="308" y1="171.9" x2="646" y2="171.9" stroke="#b4dae6" stroke-width="1.4"/>
<line x1="308" y1="183.2" x2="646" y2="183.2" stroke="#b4dae6" stroke-width="1.4"/>
<line x1="308" y1="194.5" x2="646" y2="194.5" stroke="#b4dae6" stroke-width="1.4"/>
<line x1="308" y1="205.9" x2="646" y2="205.9" stroke="#b4dae6" stroke-width="1.4"/>
<line x1="308" y1="217.2" x2="646" y2="217.2" stroke="#b4dae6" stroke-width="1.4"/>
<line x1="308" y1="239.8" x2="646" y2="239.8" stroke="#b4dae6" stroke-width="1.4"/>
<line x1="308" y1="251.1" x2="646" y2="251.1" stroke="#b4dae6" stroke-width="1.4"/>
<line x1="308" y1="262.5" x2="646" y2="262.5" stroke="#b4dae6" stroke-width="1.4"/>
<line x1="308" y1="273.8" x2="646" y2="273.8" stroke="#b4dae6" stroke-width="1.4"/>
<line x1="307.5" y1="171.1" x2="307.5" y2="282.7" stroke="#80287a" stroke-width="1.8"/>
<line x1="341.4" y1="171.1" x2="341.4" y2="282.7" stroke="#a8649f" stroke-width="1.4"/>
<line x1="375.3" y1="171.1" x2="375.3" y2="282.7" stroke="#80287a" stroke-width="1.8"/>
<line x1="409.2" y1="171.1" x2="409.2" y2="282.7" stroke="#a8649f" stroke-width="1.4"/>
<line x1="443.1" y1="171.1" x2="443.1" y2="282.7" stroke="#80287a" stroke-width="1.8"/>
<line x1="477.0" y1="171.1" x2="477.0" y2="282.7" stroke="#a8649f" stroke-width="1.4"/>
<line x1="510.9" y1="171.1" x2="510.9" y2="282.7" stroke="#80287a" stroke-width="1.8"/>
<line x1="544.8" y1="171.1" x2="544.8" y2="282.7" stroke="#a8649f" stroke-width="1.4"/>
<line x1="578.7" y1="171.1" x2="578.7" y2="282.7" stroke="#80287a" stroke-width="1.8"/>
<line x1="612.6" y1="171.1" x2="612.6" y2="282.7" stroke="#a8649f" stroke-width="1.4"/>
<line x1="646.5" y1="171.1" x2="646.5" y2="282.7" stroke="#80287a" stroke-width="1.8"/>
<line x1="301" y1="228.5" x2="656" y2="228.5" stroke="#3a8dbd" stroke-width="2.2"/>
<path d="M307.5 228.5 L308.5 227.3 L309.5 226.0 L310.5 224.8 L311.5 223.6 L312.5 222.4 L313.6 221.2 L314.6 220.1 L315.6 219.0 L316.6 218.0 L317.6 217.0 L318.6 216.1 L319.6 215.3 L320.6 214.5 L321.6 213.8 L322.6 213.1 L323.6 212.6 L324.7 212.1 L325.7 211.7 L326.7 211.4 L327.7 211.2 L328.7 211.0 L329.7 211.0 L330.7 211.1 L331.7 211.2 L332.8 211.5 L333.8 212.0 L334.8 212.5 L335.8 213.1 L336.9 213.9 L337.9 214.7 L338.9 215.7 L339.9 216.7 L340.9 217.8 L342.0 219.0 L343.0 220.3 L344.0 221.6 L345.0 222.9 L346.0 224.3 L347.1 225.7 L348.1 227.1 L349.1 228.6 L350.1 230.0 L351.2 231.4 L352.2 232.8 L353.2 234.1 L354.2 235.4 L355.2 236.7 L356.3 237.9 L357.3 239.0 L358.3 240.0 L359.3 241.0 L360.4 241.8 L361.4 242.6 L362.4 243.2 L363.4 243.7 L364.4 244.2 L365.5 244.5 L366.5 244.6 L367.5 244.7 L368.5 244.7 L369.5 244.5 L370.5 244.3 L371.5 243.9 L372.5 243.5 L373.6 243.0 L374.6 242.3 L375.6 241.6 L376.6 240.8 L377.6 240.0 L378.6 239.1 L379.6 238.1 L380.6 237.0 L381.6 235.9 L382.6 234.7 L383.6 233.5 L384.7 232.3 L385.7 231.1 L386.7 229.8 L387.7 228.5 L388.7 227.2 L389.7 225.9 L390.7 224.6 L391.7 223.4 L392.7 222.2 L393.7 221.0 L394.7 219.8 L395.7 218.7 L396.8 217.6 L397.8 216.6 L398.8 215.7 L399.8 214.9 L400.8 214.1 L401.8 213.4 L402.8 212.7 L403.8 212.2 L404.8 211.8 L405.8 211.4 L406.8 211.2 L407.9 211.0 L408.9 211.0 L409.9 211.1 L410.9 211.2 L411.9 211.5 L412.9 211.9 L413.9 212.3 L415.0 212.9 L416.0 213.6 L417.0 214.4 L418.0 215.2 L419.0 216.1 L420.0 217.2 L421.1 218.2 L422.1 219.4 L423.1 220.5 L424.1 221.8 L425.1 223.0 L426.1 224.3 L427.2 225.6 L428.2 226.9 L429.2 228.3 L430.2 229.6 L431.2 230.9 L432.3 232.1 L433.3 233.4 L434.3 234.5 L435.3 235.7 L436.3 236.7 L437.3 237.8 L438.4 238.7 L439.4 239.5 L440.4 240.3 L441.4 241.0 L442.4 241.6 L443.4 242.0 L444.5 242.4 L445.5 242.7 L446.5 242.8 L447.5 242.9 L448.5 242.9 L449.5 242.7 L450.6 242.5 L451.6 242.3 L452.6 241.9 L453.6 241.4 L454.6 240.9 L455.6 240.3 L456.7 239.7 L457.7 238.9 L458.7 238.1 L459.7 237.3 L460.7 236.3 L461.7 235.3 L462.8 234.3 L463.8 233.2 L464.8 232.0 L465.8 230.8 L466.8 229.6 L467.8 228.3 L468.9 227.0 L469.9 225.6 L470.9 224.3 L471.9 222.9 L472.9 221.5 L473.9 220.0 L475.0 218.6 L476.0 217.2 L477.0 215.8 L478.0 214.3 L479.0 212.9 L480.1 211.5 L481.1 210.2 L482.1 208.8 L483.1 207.5 L484.1 206.2 L485.1 205.0 L486.2 203.8 L487.2 202.6 L488.2 201.5 L489.2 200.5 L490.2 199.5 L491.2 198.5 L492.3 197.7 L493.3 196.9 L494.3 196.1 L495.3 195.5 L496.3 194.9 L497.3 194.4 L498.4 193.9 L499.4 193.5 L500.4 193.3 L501.4 193.1 L502.4 192.9 L503.4 192.9 L504.4 193.0 L505.4 193.1 L506.5 193.5 L507.5 193.9 L508.5 194.4 L509.5 195.1 L510.5 195.9 L511.5 196.8 L512.5 197.8 L513.5 198.9 L514.5 200.1 L515.5 201.5 L516.5 202.9 L517.5 204.3 L518.5 205.9 L519.5 207.5 L520.5 209.3 L521.5 211.0 L522.5 212.8 L523.5 214.7 L524.5 216.6 L525.5 218.5 L526.5 220.5 L527.5 222.5 L528.5 224.4 L529.5 226.4 L530.5 228.4 L531.5 230.4 L532.5 232.3 L533.5 234.2 L534.5 236.1 L535.6 237.9 L536.6 239.6 L537.6 241.4 L538.6 243.0 L539.6 244.6 L540.6 246.0 L541.6 247.4 L542.6 248.8 L543.6 250.0 L544.6 251.1 L545.6 252.1 L546.6 253.0 L547.6 253.8 L548.6 254.5 L549.6 255.0 L550.6 255.4 L551.6 255.8 L552.6 255.9 L553.6 256.0 L554.6 255.9 L555.6 255.7 L556.7 255.4 L557.7 254.9 L558.7 254.3 L559.7 253.6 L560.7 252.8 L561.8 251.8 L562.8 250.7 L563.8 249.5 L564.8 248.3 L565.8 246.9 L566.8 245.4 L567.9 243.9 L568.9 242.3 L569.9 240.6 L570.9 238.9 L571.9 237.2 L572.9 235.4 L574.0 233.6 L575.0 231.8 L576.0 230.0 L577.0 228.2 L578.0 226.4 L579.0 224.7 L580.1 223.0 L581.1 221.3 L582.1 219.7 L583.1 218.2 L584.1 216.7 L585.1 215.3 L586.2 214.1 L587.2 212.9 L588.2 211.8 L589.2 210.8 L590.2 210.0 L591.2 209.3 L592.3 208.7 L593.3 208.2 L594.3 207.9 L595.3 207.7 L596.3 207.6 L597.3 207.7 L598.3 208.1 L599.3 208.7 L600.3 209.6 L601.4 210.7 L602.4 212.0 L603.4 213.5 L604.4 215.2 L605.4 217.1 L606.4 219.0 L607.4 221.1 L608.4 223.3 L609.4 225.5 L610.4 227.8 L611.4 230.1 L612.4 232.3 L613.4 234.5 L614.4 236.6 L615.4 238.5 L616.4 240.4 L617.4 242.1 L618.4 243.6 L619.4 244.9 L620.4 246.0 L621.5 246.9 L622.5 247.5 L623.5 247.9 L624.5 248.0 L625.5 247.9 L626.5 247.7 L627.5 247.3 L628.5 246.8 L629.5 246.2 L630.6 245.4 L631.6 244.5 L632.6 243.4 L633.6 242.3 L634.6 241.0 L635.7 239.7 L636.7 238.2 L637.7 236.7 L638.7 235.2 L639.7 233.5 L640.7 231.9 L641.8 230.2 L642.8 228.5" fill="none" stroke="#1a8a40" stroke-width="2.2" stroke-dasharray="8.2 2.6"/>
<path d="M307.5 228.5 L308.3 225.0 L309.2 221.6 L310.0 218.5 L310.9 215.8 L311.7 213.5 L312.6 211.9 L313.4 210.8 L314.3 210.5 L315.1 211.7 L315.9 215.0 L316.7 220.0 L317.5 225.9 L318.3 231.8 L319.1 236.8 L319.9 240.1 L320.7 241.3 L321.6 240.4 L322.4 237.8 L323.3 234.0 L324.1 229.4 L325.0 224.8 L325.8 221.0 L326.7 218.4 L327.5 217.5 L328.2 218.1 L328.9 219.7 L329.5 222.1 L330.2 225.0 L330.9 227.9 L331.6 230.3 L332.2 231.9 L332.9 232.5 L333.8 232.1 L334.7 230.9 L335.6 229.1 L336.5 227.0 L337.4 224.9 L338.3 223.1 L339.2 221.9 L340.0 221.5 L341.1 222.2 L342.1 224.2 L343.1 227.2 L344.1 230.8 L345.1 234.3 L346.1 237.3 L347.2 239.3 L348.2 240.0 L349.2 239.6 L350.3 238.5 L351.4 236.8 L352.4 234.4 L353.5 231.4 L354.5 228.1 L355.6 224.5 L356.7 220.8 L357.7 217.0 L358.8 213.4 L359.8 210.1 L360.9 207.1 L362.0 204.7 L363.0 203.0 L364.1 201.9 L365.1 201.5 L366.2 202.4 L367.2 205.1 L368.3 209.3 L369.3 214.7 L370.4 220.9 L371.4 227.4 L372.5 233.6 L373.5 239.0 L374.6 243.2 L375.6 245.9 L376.7 246.8 L377.3 245.9 L378.0 243.3 L378.7 239.4 L379.4 234.8 L380.0 230.2 L380.7 226.3 L381.4 223.7 L382.1 222.8 L382.4 223.2 L382.8 224.5 L383.1 226.4 L383.4 228.7 L383.8 230.9 L384.1 232.8 L384.5 234.1 L384.8 234.5 L385.6 233.5 L386.3 230.8 L387.1 226.7 L387.8 221.8 L388.6 217.0 L389.4 212.9 L390.1 210.2 L390.9 209.2 L391.7 210.2 L392.5 213.2 L393.3 217.6 L394.1 222.8 L394.9 228.1 L395.7 232.5 L396.5 235.5 L397.3 236.5 L398.4 236.1 L399.4 234.9 L400.4 233.1 L401.4 230.8 L402.4 228.5 L403.4 226.2 L404.5 224.4 L405.5 223.2 L406.5 222.8 L407.3 223.1 L408.1 224.1 L408.9 225.5 L409.7 227.2 L410.5 228.8 L411.3 230.2 L412.1 231.2 L412.9 231.5 L413.9 231.2 L415.0 230.3 L416.0 229.0 L417.0 227.5 L418.0 226.0 L419.0 224.7 L420.0 223.8 L421.1 223.5 L421.9 223.8 L422.8 224.7 L423.6 226.0 L424.5 227.5 L425.3 229.0 L426.1 230.3 L427.0 231.2 L427.8 231.5 L428.5 231.2 L429.2 230.5 L429.9 229.3 L430.6 228.0 L431.2 226.7 L431.9 225.5 L432.6 224.8 L433.3 224.5 L434.0 224.9 L434.8 226.0 L435.6 227.7 L436.3 229.8 L437.1 231.8 L437.8 233.5 L438.6 234.6 L439.4 235.0 L439.9 234.6 L440.4 233.5 L440.9 231.8 L441.4 229.8 L441.9 227.7 L442.4 226.0 L442.9 224.9 L443.4 224.5 L443.8 225.1 L444.2 226.9 L444.6 229.5 L445.0 232.7 L445.3 235.8 L445.7 238.4 L446.1 240.2 L446.5 240.8 L447.5 238.9 L448.5 233.3 L449.5 225.1 L450.6 215.3 L451.6 205.5 L452.6 197.3 L453.6 191.7 L454.6 189.8 L454.9 192.1 L455.2 198.5 L455.5 208.2 L455.8 219.7 L456.1 231.1 L456.4 240.8 L456.7 247.2 L457.0 249.5 L458.1 249.0 L459.1 247.5 L460.2 245.2 L461.3 242.2 L462.4 238.7 L463.4 234.9 L464.5 231.1 L465.6 227.6 L466.7 224.6 L467.7 222.3 L468.8 220.8 L469.9 220.3 L470.4 220.9 L470.9 222.6 L471.4 225.2 L471.9 228.2 L472.4 231.2 L472.9 233.8 L473.4 235.5 L473.9 236.1 L475.0 235.6 L476.1 234.2 L477.1 232.1 L478.2 229.4 L479.2 226.7 L480.3 224.0 L481.3 221.9 L482.4 220.5 L483.4 220.0 L484.5 220.5 L485.5 222.1 L486.6 224.4 L487.6 227.4 L488.7 230.8 L489.7 234.1 L490.8 237.1 L491.8 239.4 L492.9 241.0 L493.9 241.5 L495.0 240.6 L496.0 237.9 L497.0 233.7 L498.0 228.3 L499.0 222.2 L500.1 215.8 L501.1 209.7 L502.1 204.3 L503.1 200.1 L504.1 197.4 L505.1 196.5 L506.1 198.2 L507.0 203.1 L507.9 210.5 L508.9 219.2 L509.8 227.9 L510.7 235.3 L511.7 240.2 L512.6 241.9 L513.4 241.2 L514.1 239.1 L514.9 235.9 L515.6 232.2 L516.4 228.5 L517.2 225.3 L517.9 223.2 L518.7 222.5 L519.2 222.9 L519.6 223.9 L520.1 225.4 L520.6 227.2 L521.0 229.0 L521.5 230.5 L522.0 231.5 L522.4 231.9 L522.9 231.5 L523.4 230.2 L523.8 228.4 L524.3 226.2 L524.8 224.0 L525.2 222.2 L525.7 220.9 L526.2 220.5 L526.9 221.0 L527.7 222.3 L528.4 224.2 L529.2 226.5 L530.0 228.8 L530.7 230.7 L531.5 232.0 L532.3 232.5 L532.8 232.0 L533.3 230.7 L533.8 228.8 L534.3 226.5 L534.8 224.2 L535.3 222.3 L535.8 221.0 L536.3 220.5 L537.0 221.1 L537.8 222.6 L538.5 225.0 L539.2 227.8 L539.9 230.5 L540.6 232.9 L541.4 234.4 L542.1 235.0 L542.6 234.4 L543.0 232.7 L543.5 230.2 L544.0 227.2 L544.4 224.3 L544.9 221.8 L545.4 220.1 L545.8 219.5 L546.5 220.6 L547.2 223.8 L547.9 228.6 L548.5 234.2 L549.2 239.9 L549.9 244.7 L550.6 247.9 L551.2 249.0 L551.7 246.7 L552.1 240.1 L552.5 230.2 L552.9 218.5 L553.4 206.8 L553.8 196.9 L554.2 190.3 L554.6 188.0 L555.3 190.3 L556.0 196.9 L556.7 206.7 L557.3 218.2 L558.0 229.8 L558.7 239.6 L559.4 246.2 L560.1 248.5 L560.9 247.2 L561.8 243.5 L562.7 238.0 L563.6 231.5 L564.5 225.0 L565.4 219.5 L566.3 215.8 L567.2 214.5 L567.9 215.2 L568.6 217.2 L569.3 220.3 L570.1 223.8 L570.8 227.4 L571.5 230.5 L572.2 232.5 L572.9 233.2 L573.3 232.9 L573.6 232.1 L574.0 230.8 L574.3 229.3 L574.6 227.9 L575.0 226.6 L575.3 225.8 L575.6 225.5 L576.4 226.0 L577.1 227.3 L577.8 229.2 L578.5 231.5 L579.3 233.8 L580.0 235.7 L580.7 237.0 L581.4 237.5 L581.9 236.5 L582.3 233.5 L582.8 229.0 L583.3 223.8 L583.7 218.5 L584.2 214.0 L584.7 211.0 L585.1 210.0 L585.6 210.9 L586.1 213.4 L586.5 217.1 L587.0 221.6 L587.5 226.0 L587.9 229.7 L588.4 232.2 L588.9 233.1 L589.3 232.6 L589.6 231.3 L590.0 229.2 L590.4 226.8 L590.8 224.4 L591.2 222.3 L591.5 221.0 L591.9 220.5 L592.5 220.9 L593.0 222.1 L593.6 223.9 L594.1 226.0 L594.7 228.1 L595.2 229.9 L595.8 231.1 L596.3 231.5 L596.8 231.1 L597.3 229.8 L597.7 228.0 L598.2 225.8 L598.7 223.5 L599.1 221.7 L599.6 220.4 L600.1 220.0 L600.9 220.6 L601.8 222.2 L602.6 224.6 L603.4 227.5 L604.3 230.4 L605.1 232.8 L606.0 234.4 L606.8 235.0 L607.3 234.5 L607.9 233.2 L608.4 231.1 L608.9 228.8 L609.4 226.4 L609.9 224.3 L610.4 223.0 L610.9 222.5 L611.6 222.9 L612.3 224.1 L612.9 225.9 L613.6 228.0 L614.3 230.1 L615.0 231.9 L615.7 233.1 L616.3 233.5 L617.4 233.1 L618.5 232.0 L619.6 230.3 L620.7 228.3 L621.8 226.3 L622.9 224.6 L624.0 223.5 L625.1 223.1 L625.6 223.4 L626.1 224.1 L626.5 225.2 L627.0 226.6 L627.5 227.9 L627.9 229.0 L628.4 229.7 L628.9 230.0 L629.5 229.5 L630.1 228.2 L630.8 226.1 L631.4 223.8 L632.1 221.4 L632.7 219.3 L633.3 218.0 L634.0 217.5 L635.0 217.7 L636.1 218.2 L637.2 219.0 L638.3 220.1 L639.4 221.4 L640.5 223.0 L641.6 224.7 L642.7 226.6 L643.8 228.5" fill="none" stroke="#d4202c" stroke-width="2.5" stroke-linecap="round" stroke-dasharray="0 4"/>
<text x="307.5" y="293.4" text-anchor="middle" class="ct">0</text>
<text x="375.3" y="293.4" text-anchor="middle" class="ct">2</text>
<text x="443.1" y="293.4" text-anchor="middle" class="ct">4</text>
<text x="510.9" y="293.4" text-anchor="middle" class="ct">6</text>
<text x="578.7" y="293.4" text-anchor="middle" class="ct">8</text>
<text x="646.5" y="293.4" text-anchor="middle" class="ct">10</text>
<text x="305.5" y="305.7" class="ct" textLength="79" lengthAdjust="spacingAndGlyphs">TIME IN SECONDS - &gt;</text>
<text transform="translate(298.4 228.5) rotate(-90)" text-anchor="middle" class="ct" style="font-size:8.2px;stroke-width:0.25px" textLength="66" lengthAdjust="spacingAndGlyphs">&lt; - VIBRATION - &gt;</text>
<line x1="308" y1="380.8" x2="646" y2="380.8" stroke="#b4dae6" stroke-width="1.4"/>
<line x1="308" y1="392.1" x2="646" y2="392.1" stroke="#b4dae6" stroke-width="1.4"/>
<line x1="308" y1="403.4" x2="646" y2="403.4" stroke="#b4dae6" stroke-width="1.4"/>
<line x1="308" y1="414.8" x2="646" y2="414.8" stroke="#b4dae6" stroke-width="1.4"/>
<line x1="308" y1="426.1" x2="646" y2="426.1" stroke="#b4dae6" stroke-width="1.4"/>
<line x1="308" y1="448.7" x2="646" y2="448.7" stroke="#b4dae6" stroke-width="1.4"/>
<line x1="308" y1="460.0" x2="646" y2="460.0" stroke="#b4dae6" stroke-width="1.4"/>
<line x1="308" y1="471.4" x2="646" y2="471.4" stroke="#b4dae6" stroke-width="1.4"/>
<line x1="308" y1="482.7" x2="646" y2="482.7" stroke="#b4dae6" stroke-width="1.4"/>
<line x1="307.5" y1="380.0" x2="307.5" y2="491.6" stroke="#80287a" stroke-width="1.8"/>
<line x1="341.4" y1="380.0" x2="341.4" y2="491.6" stroke="#a8649f" stroke-width="1.4"/>
<line x1="375.3" y1="380.0" x2="375.3" y2="491.6" stroke="#80287a" stroke-width="1.8"/>
<line x1="409.2" y1="380.0" x2="409.2" y2="491.6" stroke="#a8649f" stroke-width="1.4"/>
<line x1="443.1" y1="380.0" x2="443.1" y2="491.6" stroke="#80287a" stroke-width="1.8"/>
<line x1="477.0" y1="380.0" x2="477.0" y2="491.6" stroke="#a8649f" stroke-width="1.4"/>
<line x1="510.9" y1="380.0" x2="510.9" y2="491.6" stroke="#80287a" stroke-width="1.8"/>
<line x1="544.8" y1="380.0" x2="544.8" y2="491.6" stroke="#a8649f" stroke-width="1.4"/>
<line x1="578.7" y1="380.0" x2="578.7" y2="491.6" stroke="#80287a" stroke-width="1.8"/>
<line x1="612.6" y1="380.0" x2="612.6" y2="491.6" stroke="#a8649f" stroke-width="1.4"/>
<line x1="646.5" y1="380.0" x2="646.5" y2="491.6" stroke="#80287a" stroke-width="1.8"/>
<line x1="301" y1="437.4" x2="656" y2="437.4" stroke="#3a8dbd" stroke-width="2.2"/>
<path d="M307.5 437.4 L308.5 436.2 L309.5 434.9 L310.5 433.7 L311.5 432.5 L312.5 431.3 L313.6 430.1 L314.6 429.0 L315.6 427.9 L316.6 426.9 L317.6 425.9 L318.6 425.0 L319.6 424.2 L320.6 423.4 L321.6 422.7 L322.6 422.0 L323.6 421.5 L324.7 421.0 L325.7 420.6 L326.7 420.3 L327.7 420.1 L328.7 419.9 L329.7 419.9 L330.7 420.0 L331.7 420.1 L332.8 420.4 L333.8 420.9 L334.8 421.4 L335.8 422.0 L336.9 422.8 L337.9 423.6 L338.9 424.6 L339.9 425.6 L340.9 426.7 L342.0 427.9 L343.0 429.2 L344.0 430.5 L345.0 431.8 L346.0 433.2 L347.1 434.6 L348.1 436.0 L349.1 437.5 L350.1 438.9 L351.2 440.3 L352.2 441.7 L353.2 443.0 L354.2 444.3 L355.2 445.6 L356.3 446.8 L357.3 447.9 L358.3 448.9 L359.3 449.9 L360.4 450.7 L361.4 451.5 L362.4 452.1 L363.4 452.6 L364.4 453.1 L365.5 453.4 L366.5 453.5 L367.5 453.6 L368.5 453.6 L369.5 453.4 L370.5 453.2 L371.5 452.8 L372.5 452.4 L373.6 451.9 L374.6 451.2 L375.6 450.5 L376.6 449.7 L377.6 448.9 L378.6 448.0 L379.6 447.0 L380.6 445.9 L381.6 444.8 L382.6 443.6 L383.6 442.4 L384.7 441.2 L385.7 440.0 L386.7 438.7 L387.7 437.4 L388.7 436.1 L389.7 434.8 L390.7 433.5 L391.7 432.3 L392.7 431.1 L393.7 429.9 L394.7 428.7 L395.7 427.6 L396.8 426.5 L397.8 425.5 L398.8 424.6 L399.8 423.8 L400.8 423.0 L401.8 422.3 L402.8 421.6 L403.8 421.1 L404.8 420.7 L405.8 420.3 L406.8 420.1 L407.9 419.9 L408.9 419.9 L409.9 420.0 L410.9 420.1 L411.9 420.4 L412.9 420.8 L413.9 421.2 L415.0 421.8 L416.0 422.5 L417.0 423.3 L418.0 424.1 L419.0 425.0 L420.0 426.1 L421.1 427.1 L422.1 428.3 L423.1 429.4 L424.1 430.7 L425.1 431.9 L426.1 433.2 L427.2 434.5 L428.2 435.8 L429.2 437.2 L430.2 438.5 L431.2 439.8 L432.3 441.0 L433.3 442.3 L434.3 443.4 L435.3 444.6 L436.3 445.6 L437.3 446.7 L438.4 447.6 L439.4 448.4 L440.4 449.2 L441.4 449.9 L442.4 450.5 L443.4 450.9 L444.5 451.3 L445.5 451.6 L446.5 451.7 L447.5 451.8 L448.5 451.8 L449.5 451.6 L450.6 451.4 L451.6 451.2 L452.6 450.8 L453.6 450.3 L454.6 449.8 L455.6 449.2 L456.7 448.6 L457.7 447.8 L458.7 447.0 L459.7 446.2 L460.7 445.2 L461.7 444.2 L462.8 443.2 L463.8 442.1 L464.8 440.9 L465.8 439.7 L466.8 438.5 L467.8 437.2 L468.9 435.9 L469.9 434.5 L470.9 433.2 L471.9 431.8 L472.9 430.4 L473.9 428.9 L475.0 427.5 L476.0 426.1 L477.0 424.7 L478.0 423.2 L479.0 421.8 L480.1 420.4 L481.1 419.1 L482.1 417.7 L483.1 416.4 L484.1 415.1 L485.1 413.9 L486.2 412.7 L487.2 411.5 L488.2 410.4 L489.2 409.4 L490.2 408.4 L491.2 407.4 L492.3 406.6 L493.3 405.8 L494.3 405.0 L495.3 404.4 L496.3 403.8 L497.3 403.3 L498.4 402.8 L499.4 402.4 L500.4 402.2 L501.4 402.0 L502.4 401.8 L503.4 401.8 L504.4 401.9 L505.4 402.0 L506.5 402.4 L507.5 402.8 L508.5 403.3 L509.5 404.0 L510.5 404.8 L511.5 405.7 L512.5 406.7 L513.5 407.8 L514.5 409.0 L515.5 410.4 L516.5 411.8 L517.5 413.2 L518.5 414.8 L519.5 416.4 L520.5 418.2 L521.5 419.9 L522.5 421.7 L523.5 423.6 L524.5 425.5 L525.5 427.4 L526.5 429.4 L527.5 431.4 L528.5 433.3 L529.5 435.3 L530.5 437.3 L531.5 439.3 L532.5 441.2 L533.5 443.1 L534.5 445.0 L535.6 446.8 L536.6 448.5 L537.6 450.3 L538.6 451.9 L539.6 453.5 L540.6 454.9 L541.6 456.3 L542.6 457.7 L543.6 458.9 L544.6 460.0 L545.6 461.0 L546.6 461.9 L547.6 462.7 L548.6 463.4 L549.6 463.9 L550.6 464.3 L551.6 464.7 L552.6 464.8 L553.6 464.9 L554.6 464.8 L555.6 464.6 L556.7 464.3 L557.7 463.8 L558.7 463.2 L559.7 462.5 L560.7 461.7 L561.8 460.7 L562.8 459.6 L563.8 458.4 L564.8 457.2 L565.8 455.8 L566.8 454.3 L567.9 452.8 L568.9 451.2 L569.9 449.5 L570.9 447.8 L571.9 446.1 L572.9 444.3 L574.0 442.5 L575.0 440.7 L576.0 438.9 L577.0 437.1 L578.0 435.3 L579.0 433.6 L580.1 431.9 L581.1 430.2 L582.1 428.6 L583.1 427.1 L584.1 425.6 L585.1 424.2 L586.2 423.0 L587.2 421.8 L588.2 420.7 L589.2 419.7 L590.2 418.9 L591.2 418.2 L592.3 417.6 L593.3 417.1 L594.3 416.8 L595.3 416.6 L596.3 416.5 L597.3 416.6 L598.3 417.0 L599.3 417.6 L600.3 418.5 L601.4 419.6 L602.4 420.9 L603.4 422.4 L604.4 424.1 L605.4 426.0 L606.4 427.9 L607.4 430.0 L608.4 432.2 L609.4 434.4 L610.4 436.7 L611.4 439.0 L612.4 441.2 L613.4 443.4 L614.4 445.5 L615.4 447.4 L616.4 449.3 L617.4 451.0 L618.4 452.5 L619.4 453.8 L620.4 454.9 L621.5 455.8 L622.5 456.4 L623.5 456.8 L624.5 456.9 L625.5 456.8 L626.5 456.6 L627.5 456.2 L628.5 455.7 L629.5 455.1 L630.6 454.3 L631.6 453.4 L632.6 452.3 L633.6 451.2 L634.6 449.9 L635.7 448.6 L636.7 447.1 L637.7 445.6 L638.7 444.1 L639.7 442.4 L640.7 440.8 L641.8 439.1 L642.8 437.4" fill="none" stroke="#1a8a40" stroke-width="2.2" stroke-dasharray="8.2 2.6"/>
<text x="307.5" y="502.3" text-anchor="middle" class="ct">0</text>
<text x="375.3" y="502.3" text-anchor="middle" class="ct">2</text>
<text x="443.1" y="502.3" text-anchor="middle" class="ct">4</text>
<text x="510.9" y="502.3" text-anchor="middle" class="ct">6</text>
<text x="578.7" y="502.3" text-anchor="middle" class="ct">8</text>
<text x="646.5" y="502.3" text-anchor="middle" class="ct">10</text>
<text x="305.5" y="514.6" class="ct" textLength="79" lengthAdjust="spacingAndGlyphs">TIME IN SECONDS - &gt;</text>
<text transform="translate(298.4 437.4) rotate(-90)" text-anchor="middle" class="ct" style="font-size:8.2px;stroke-width:0.25px" textLength="66" lengthAdjust="spacingAndGlyphs">&lt; - VIBRATION - &gt;</text>
<line x1="308" y1="573.0" x2="646" y2="573.0" stroke="#b4dae6" stroke-width="1.4"/>
<line x1="308" y1="584.3" x2="646" y2="584.3" stroke="#b4dae6" stroke-width="1.4"/>
<line x1="308" y1="595.6" x2="646" y2="595.6" stroke="#b4dae6" stroke-width="1.4"/>
<line x1="308" y1="607.0" x2="646" y2="607.0" stroke="#b4dae6" stroke-width="1.4"/>
<line x1="308" y1="618.3" x2="646" y2="618.3" stroke="#b4dae6" stroke-width="1.4"/>
<line x1="308" y1="640.9" x2="646" y2="640.9" stroke="#b4dae6" stroke-width="1.4"/>
<line x1="308" y1="652.2" x2="646" y2="652.2" stroke="#b4dae6" stroke-width="1.4"/>
<line x1="308" y1="663.6" x2="646" y2="663.6" stroke="#b4dae6" stroke-width="1.4"/>
<line x1="308" y1="674.9" x2="646" y2="674.9" stroke="#b4dae6" stroke-width="1.4"/>
<line x1="307.5" y1="572.2" x2="307.5" y2="683.8" stroke="#80287a" stroke-width="1.8"/>
<line x1="341.4" y1="572.2" x2="341.4" y2="683.8" stroke="#a8649f" stroke-width="1.4"/>
<line x1="375.3" y1="572.2" x2="375.3" y2="683.8" stroke="#80287a" stroke-width="1.8"/>
<line x1="409.2" y1="572.2" x2="409.2" y2="683.8" stroke="#a8649f" stroke-width="1.4"/>
<line x1="443.1" y1="572.2" x2="443.1" y2="683.8" stroke="#80287a" stroke-width="1.8"/>
<line x1="477.0" y1="572.2" x2="477.0" y2="683.8" stroke="#a8649f" stroke-width="1.4"/>
<line x1="510.9" y1="572.2" x2="510.9" y2="683.8" stroke="#80287a" stroke-width="1.8"/>
<line x1="544.8" y1="572.2" x2="544.8" y2="683.8" stroke="#a8649f" stroke-width="1.4"/>
<line x1="578.7" y1="572.2" x2="578.7" y2="683.8" stroke="#80287a" stroke-width="1.8"/>
<line x1="612.6" y1="572.2" x2="612.6" y2="683.8" stroke="#a8649f" stroke-width="1.4"/>
<line x1="646.5" y1="572.2" x2="646.5" y2="683.8" stroke="#80287a" stroke-width="1.8"/>
<line x1="301" y1="629.6" x2="656" y2="629.6" stroke="#3a8dbd" stroke-width="2.2"/>
<path d="M307.5 629.6 L308.3 626.1 L309.2 622.7 L310.0 619.6 L310.9 616.9 L311.7 614.6 L312.6 613.0 L313.4 611.9 L314.3 611.6 L315.1 612.8 L315.9 616.1 L316.7 621.1 L317.5 627.0 L318.3 632.9 L319.1 637.9 L319.9 641.2 L320.7 642.4 L321.6 641.5 L322.4 638.9 L323.3 635.1 L324.1 630.5 L325.0 625.9 L325.8 622.1 L326.7 619.5 L327.5 618.6 L328.2 619.2 L328.9 620.8 L329.5 623.2 L330.2 626.1 L330.9 629.0 L331.6 631.4 L332.2 633.0 L332.9 633.6 L333.8 633.2 L334.7 632.0 L335.6 630.2 L336.5 628.1 L337.4 626.0 L338.3 624.2 L339.2 623.0 L340.0 622.6 L341.1 623.3 L342.1 625.3 L343.1 628.3 L344.1 631.9 L345.1 635.4 L346.1 638.4 L347.2 640.4 L348.2 641.1 L349.2 640.7 L350.3 639.6 L351.4 637.9 L352.4 635.5 L353.5 632.5 L354.5 629.2 L355.6 625.6 L356.7 621.9 L357.7 618.1 L358.8 614.5 L359.8 611.2 L360.9 608.2 L362.0 605.8 L363.0 604.1 L364.1 603.0 L365.1 602.6 L366.2 603.5 L367.2 606.2 L368.3 610.4 L369.3 615.8 L370.4 622.0 L371.4 628.5 L372.5 634.7 L373.5 640.1 L374.6 644.3 L375.6 647.0 L376.7 647.9 L377.3 647.0 L378.0 644.4 L378.7 640.5 L379.4 635.9 L380.0 631.3 L380.7 627.4 L381.4 624.8 L382.1 623.9 L382.4 624.3 L382.8 625.6 L383.1 627.5 L383.4 629.8 L383.8 632.0 L384.1 633.9 L384.5 635.2 L384.8 635.6 L385.6 634.6 L386.3 631.9 L387.1 627.8 L387.8 623.0 L388.6 618.1 L389.4 614.0 L390.1 611.3 L390.9 610.3 L391.7 611.3 L392.5 614.3 L393.3 618.7 L394.1 624.0 L394.9 629.2 L395.7 633.6 L396.5 636.6 L397.3 637.6 L398.4 637.2 L399.4 636.0 L400.4 634.2 L401.4 631.9 L402.4 629.6 L403.4 627.3 L404.5 625.5 L405.5 624.3 L406.5 623.9 L407.3 624.2 L408.1 625.2 L408.9 626.6 L409.7 628.2 L410.5 629.9 L411.3 631.3 L412.1 632.3 L412.9 632.6 L413.9 632.3 L415.0 631.4 L416.0 630.1 L417.0 628.6 L418.0 627.1 L419.0 625.8 L420.0 624.9 L421.1 624.6 L421.9 624.9 L422.8 625.8 L423.6 627.1 L424.5 628.6 L425.3 630.1 L426.1 631.4 L427.0 632.3 L427.8 632.6 L428.5 632.3 L429.2 631.6 L429.9 630.4 L430.6 629.1 L431.2 627.8 L431.9 626.6 L432.6 625.9 L433.3 625.6 L434.0 626.0 L434.8 627.1 L435.6 628.8 L436.3 630.9 L437.1 632.9 L437.8 634.6 L438.6 635.7 L439.4 636.1 L439.9 635.7 L440.4 634.6 L440.9 632.9 L441.4 630.9 L441.9 628.8 L442.4 627.1 L442.9 626.0 L443.4 625.6 L443.8 626.2 L444.2 628.0 L444.6 630.6 L445.0 633.8 L445.3 636.9 L445.7 639.5 L446.1 641.3 L446.5 641.9 L447.5 640.0 L448.5 634.4 L449.5 626.2 L450.6 616.4 L451.6 606.6 L452.6 598.4 L453.6 592.8 L454.6 590.9 L454.9 593.2 L455.2 599.6 L455.5 609.3 L455.8 620.8 L456.1 632.2 L456.4 641.9 L456.7 648.3 L457.0 650.6 L458.1 650.1 L459.1 648.6 L460.2 646.3 L461.3 643.3 L462.4 639.8 L463.4 636.0 L464.5 632.2 L465.6 628.7 L466.7 625.7 L467.7 623.4 L468.8 621.9 L469.9 621.4 L470.4 622.0 L470.9 623.7 L471.4 626.3 L471.9 629.3 L472.4 632.3 L472.9 634.9 L473.4 636.6 L473.9 637.2 L475.0 636.7 L476.1 635.3 L477.1 633.2 L478.2 630.5 L479.2 627.8 L480.3 625.1 L481.3 623.0 L482.4 621.6 L483.4 621.1 L484.5 621.6 L485.5 623.2 L486.6 625.5 L487.6 628.5 L488.7 631.9 L489.7 635.2 L490.8 638.2 L491.8 640.5 L492.9 642.1 L493.9 642.6 L495.0 641.7 L496.0 639.0 L497.0 634.8 L498.0 629.4 L499.0 623.3 L500.1 616.9 L501.1 610.8 L502.1 605.4 L503.1 601.2 L504.1 598.5 L505.1 597.6 L506.1 599.3 L507.0 604.2 L507.9 611.6 L508.9 620.3 L509.8 629.0 L510.7 636.4 L511.7 641.3 L512.6 643.0 L513.4 642.3 L514.1 640.2 L514.9 637.0 L515.6 633.3 L516.4 629.6 L517.2 626.4 L517.9 624.3 L518.7 623.6 L519.2 624.0 L519.6 625.0 L520.1 626.5 L520.6 628.3 L521.0 630.1 L521.5 631.6 L522.0 632.6 L522.4 633.0 L522.9 632.6 L523.4 631.3 L523.8 629.5 L524.3 627.3 L524.8 625.1 L525.2 623.3 L525.7 622.0 L526.2 621.6 L526.9 622.1 L527.7 623.4 L528.4 625.3 L529.2 627.6 L530.0 629.9 L530.7 631.8 L531.5 633.1 L532.3 633.6 L532.8 633.1 L533.3 631.8 L533.8 629.9 L534.3 627.6 L534.8 625.3 L535.3 623.4 L535.8 622.1 L536.3 621.6 L537.0 622.2 L537.8 623.7 L538.5 626.1 L539.2 628.9 L539.9 631.6 L540.6 634.0 L541.4 635.5 L542.1 636.1 L542.6 635.5 L543.0 633.8 L543.5 631.3 L544.0 628.4 L544.4 625.4 L544.9 622.9 L545.4 621.2 L545.8 620.6 L546.5 621.7 L547.2 624.9 L547.9 629.7 L548.5 635.4 L549.2 641.0 L549.9 645.8 L550.6 649.0 L551.2 650.1 L551.7 647.8 L552.1 641.2 L552.5 631.3 L552.9 619.6 L553.4 607.9 L553.8 598.0 L554.2 591.4 L554.6 589.1 L555.3 591.4 L556.0 598.0 L556.7 607.8 L557.3 619.4 L558.0 630.9 L558.7 640.7 L559.4 647.3 L560.1 649.6 L560.9 648.3 L561.8 644.6 L562.7 639.1 L563.6 632.6 L564.5 626.1 L565.4 620.6 L566.3 616.9 L567.2 615.6 L567.9 616.3 L568.6 618.3 L569.3 621.4 L570.1 625.0 L570.8 628.5 L571.5 631.6 L572.2 633.6 L572.9 634.3 L573.3 634.0 L573.6 633.2 L574.0 631.9 L574.3 630.5 L574.6 629.0 L575.0 627.7 L575.3 626.9 L575.6 626.6 L576.4 627.1 L577.1 628.4 L577.8 630.3 L578.5 632.6 L579.3 634.9 L580.0 636.8 L580.7 638.1 L581.4 638.6 L581.9 637.6 L582.3 634.6 L582.8 630.1 L583.3 624.9 L583.7 619.6 L584.2 615.1 L584.7 612.1 L585.1 611.1 L585.6 612.0 L586.1 614.5 L586.5 618.2 L587.0 622.6 L587.5 627.1 L587.9 630.8 L588.4 633.3 L588.9 634.2 L589.3 633.7 L589.6 632.4 L590.0 630.3 L590.4 627.9 L590.8 625.5 L591.2 623.4 L591.5 622.1 L591.9 621.6 L592.5 622.0 L593.0 623.2 L593.6 625.0 L594.1 627.1 L594.7 629.2 L595.2 631.0 L595.8 632.2 L596.3 632.6 L596.8 632.2 L597.3 630.9 L597.7 629.1 L598.2 626.9 L598.7 624.6 L599.1 622.8 L599.6 621.5 L600.1 621.1 L600.9 621.7 L601.8 623.3 L602.6 625.7 L603.4 628.6 L604.3 631.5 L605.1 633.9 L606.0 635.5 L606.8 636.1 L607.3 635.6 L607.9 634.3 L608.4 632.2 L608.9 629.9 L609.4 627.5 L609.9 625.4 L610.4 624.1 L610.9 623.6 L611.6 624.0 L612.3 625.2 L612.9 627.0 L613.6 629.1 L614.3 631.2 L615.0 633.0 L615.7 634.2 L616.3 634.6 L617.4 634.2 L618.5 633.1 L619.6 631.4 L620.7 629.4 L621.8 627.4 L622.9 625.7 L624.0 624.6 L625.1 624.2 L625.6 624.5 L626.1 625.2 L626.5 626.3 L627.0 627.6 L627.5 629.0 L627.9 630.1 L628.4 630.8 L628.9 631.1 L629.5 630.6 L630.1 629.3 L630.8 627.2 L631.4 624.9 L632.1 622.5 L632.7 620.4 L633.3 619.1 L634.0 618.6 L635.0 618.8 L636.1 619.3 L637.2 620.1 L638.3 621.2 L639.4 622.5 L640.5 624.1 L641.6 625.8 L642.7 627.7 L643.8 629.6" fill="none" stroke="#d4202c" stroke-width="2.5" stroke-linecap="round" stroke-dasharray="0 4"/>
<text x="307.5" y="694.5" text-anchor="middle" class="ct">0</text>
<text x="375.3" y="694.5" text-anchor="middle" class="ct">2</text>
<text x="443.1" y="694.5" text-anchor="middle" class="ct">4</text>
<text x="510.9" y="694.5" text-anchor="middle" class="ct">6</text>
<text x="578.7" y="694.5" text-anchor="middle" class="ct">8</text>
<text x="646.5" y="694.5" text-anchor="middle" class="ct">10</text>
<text x="305.5" y="706.8" class="ct" textLength="79" lengthAdjust="spacingAndGlyphs">TIME IN SECONDS - &gt;</text>
<text transform="translate(298.4 629.6) rotate(-90)" text-anchor="middle" class="ct" style="font-size:8.2px;stroke-width:0.25px" textLength="66" lengthAdjust="spacingAndGlyphs">&lt; - VIBRATION - &gt;</text>
<g fill="#0a0a0a">
<path d="M675.2 396 Q675.4 391.2 680.4 391.2 Q685.6 391.2 685.8 396 Q686 401 684.4 403.6 Q682.8 405.6 680.4 405.6 Q678 405.6 676.6 403.6 Q675 401 675.2 396 Z"/>
<path d="M677.2 403 L683.6 403 L684.2 408.4 L676.6 408.4 Z"/>
<path d="M666.4 409 Q670 407.6 676.4 406.6 L684.6 406.6 Q690.6 407.6 692.8 409.2 Q695.8 426 695.2 446.6 L689.4 447 L688.8 470 L689.8 489.4 Q690.4 493.6 687 493.8 L682.4 492.8 L680.8 480 L680.2 452 L679.2 452 L677.8 480 L676 489.4 Q671.4 491.6 668.4 488.8 L671.4 470 L670.4 447 L662.6 446 Q662.4 424 666.4 409 Z"/>
</g>
<path d="M674.2 408 L678.6 408 L679.4 434.6 L674.6 436.4 Q670.6 435.6 671 432.6 Q673.4 431 674 428 Z" fill="#ffffff"/>
<path d="M682 408 L685.2 408 L685.6 433 L683 434.4 Z" fill="#ffffff"/>
<path d="M678.6 408.6 L681.6 408.6 L681.8 412 L682.6 433 L680.2 436 L677.8 433 L678.8 412 Z" fill="#0a0a0a"/>
<path d="M679.7 453 L679.5 488" stroke="#ffffff" stroke-width="0.6"/>

<g fill="#0a0a0a">
<path d="M721.6 602.2 Q723 601.4 725 602 Q729.8 604 729.8 609 Q729.4 613.4 725.6 614.6 Q721.6 615.2 719.6 613.6 L718.8 611.8 L717.4 610.6 L717.2 609.6 L718.4 608.4 Q718.2 606.6 719.6 605.8 Q720.4 603.6 721.6 602.2 Z"/>
<path d="M718.5 617.5 L724 615.5 L728.5 619.5 L728.5 621 L718.5 621 Z"/>
<path d="M710 620 Q713 615.5 718.5 614.5 L718.8 615.5 Q714 617 711.5 621 Z"/>
<path d="M713.5 621 Q716 617 719.5 615.5 L719.8 616.5 Q717 618.5 715 621 Z"/>
</g>
</svg>
<div class="abs" style="left:17px;top:620px;width:983px;height:1.5px;background:#fbfbfb"></div>
<div class="abs" style="left:0;top:622px;width:1000px;height:17px;background:#f0f0f0"></div>
<svg width='1000' height='639' style='font-family:"Liberation Sans", sans-serif'><rect x="990" y="87" width="10" height="533" fill="#fbfbfb"/>
<path d="M992.2 89.3 L995.5 87 L998.8 89.3 L995.5 91.6 Z" fill="#1a1a1a"/>
<path d="M992.8 98.4 L995.5 95.8 L998.2 98.4 Z" fill="#111"/>
<rect x="990.5" y="101" width="9" height="1" fill="#505050"/>
<rect x="992" y="103" width="7" height="402.6" fill="#d7d4cd"/>
<rect x="991" y="102" width="8" height="1" fill="#ffffff"/>
<rect x="990.6" y="505.4" width="8.6" height="1.2" fill="#2e2e2e"/>
<rect x="992" y="506.6" width="7" height="101.4" fill="#ebe9e5"/>
<rect x="999" y="92.4" width="1" height="527" fill="#3a3a3a"/>
<path d="M992.8 613.4 L998.2 613.4 L995.5 616.2 Z" fill="#111"/>
<rect x="990.5" y="619" width="9.5" height="1" fill="#444"/>
<path d="M408.6 626.8 L404 630.2 L408.6 633.6 Z" fill="#b4b4b4"/><rect x="409.6" y="626.8" width="1.6" height="6.8" fill="#b4b4b4"/>
<path d="M425 627 L421 630.2 L425 633.4 Z" fill="#b4b4b4"/>
<rect x="430.4" y="623.2" width="69.2" height="12.6" fill="#fff" stroke="#a8a8a8" stroke-width="0.9" rx="1"/>
<text x="434" y="633" font-size="7.8" fill="#222" stroke="#222" stroke-width="0.18" font-weight="normal" text-anchor="start" textLength="11.6" lengthAdjust="spacingAndGlyphs" >1 / 1</text>
<path d="M492.4 629.4 L496.4 629.4 L494.4 631.6999999999999 Z" fill="#111"/>
<path d="M504.8 627 L508.8 630.2 L504.8 633.4 Z" fill="#b4b4b4"/>
<rect x="517.2" y="626.8" width="1.6" height="6.8" fill="#b4b4b4"/><path d="M520.2 626.8 L524.8 630.2 L520.2 633.6 Z" fill="#b4b4b4"/>
<rect x="532.6" y="624.6" width="6" height="6" fill="#fff" stroke="#6a7a90" stroke-width="0.8"/><rect x="536" y="628.4" width="6" height="7" fill="#fff" stroke="#555" stroke-width="0.8"/><rect x="533.4" y="625.4" width="3" height="2" fill="#3a6ab0"/>
<rect x="549.4" y="624.8" width="5.6" height="6" fill="#fff" stroke="#d0d0d0" stroke-width="0.8"/><rect x="552" y="628.4" width="5.6" height="6.4" fill="#fff" stroke="#d0d0d0" stroke-width="0.8"/>
<rect x="798" y="623.8" width="13.2" height="12.4" fill="#ddc8ee"/>
<rect x="801.8" y="625" width="5.6" height="9.6" fill="#fff" stroke="#6a5a7a" stroke-width="0.9"/>
<g fill="none" stroke="#cfcfcf" stroke-width="0.9"><rect x="815.8" y="624.8" width="6" height="6.4"/><path d="M815.8 633.6 L821.8 633.6 M817 635.4 L820.6 635.4"/><rect x="830.6" y="625.6" width="7" height="9"/><path d="M834.1 625.6 L834.1 634.6"/><path d="M846 624.6 L854 624.6 M850 624.6 L850 635.6 M847 627 L853 627 M847 629.6 L853 629.6"/></g>
<text x="872" y="633" font-size="7.8" fill="#222" stroke="#222" stroke-width="0.18" font-weight="normal" text-anchor="start" textLength="16.4" lengthAdjust="spacingAndGlyphs" >100%</text>
<path d="M903.4 628.6 L907.4 628.6 L905.4 630.9 Z" fill="#111"/>
<circle cx="914.6" cy="629.6" r="4.4" fill="#fafafa" stroke="#6a6a6a" stroke-width="0.9"/><path d="M912.4 629.6 L916.8 629.6" stroke="#444" stroke-width="1"/>
<rect x="923" y="629.4" width="54" height="1.2" fill="#7a7a7a"/>
<rect x="949.2" y="626.2" width="2.2" height="6.8" fill="#222"/>
<circle cx="984.8" cy="629.4" r="4.4" fill="#fafafa" stroke="#6a6a6a" stroke-width="0.9"/><path d="M982.6 629.4 L987 629.4 M984.8 627.2 L984.8 631.6" stroke="#444" stroke-width="1"/></svg>
</body></html>
